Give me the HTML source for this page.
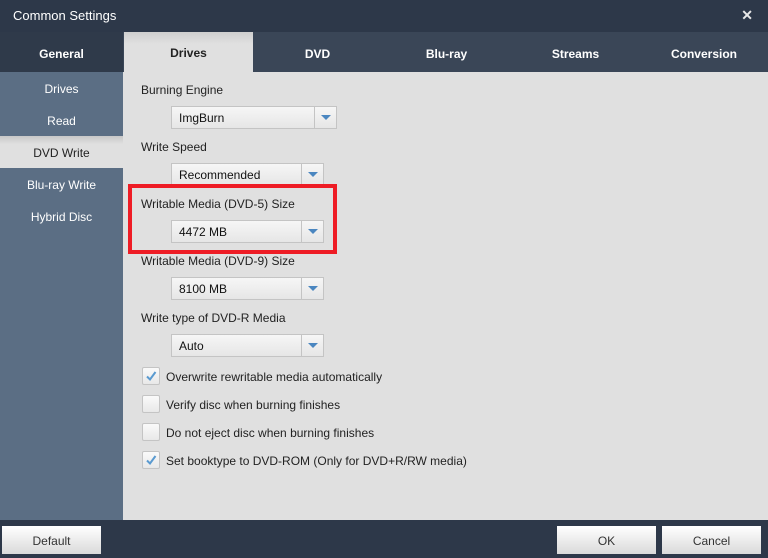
<!DOCTYPE html>
<html><head><style>
*{margin:0;padding:0;box-sizing:border-box}
body{width:768px;height:558px;overflow:hidden;font-family:"Liberation Sans",sans-serif;font-size:12px;background:#e0e0e0;position:relative}
.a{position:absolute}
.title{left:0;top:0;width:768px;height:32px;background:#2d3849;color:#fff;font-size:13px;line-height:32px;padding-left:13px}
.tabs{left:0;top:32px;width:768px;height:40px;background:#3a4657}
.tab{position:absolute;top:0;height:40px;line-height:44px;text-align:center;color:#fff;font-weight:bold;font-size:12px}
.tab.act{background:linear-gradient(#cfcfcf,#e0e0e0 12px);color:#222;line-height:42px}
.side{left:0;top:72px;width:123px;height:448px;background:#5b6e84}
.si{position:absolute;left:0;width:123px;height:32px;line-height:34px;text-align:center;color:#fff;font-size:12px}
.si.act{background:linear-gradient(#c8c8c8,#e0e0e0 8px);color:#222}
.lbl{position:absolute;left:141px;color:#222;font-size:12px}
.dd{position:absolute;left:171px;height:23px;border:1px solid #c4c4c4;background:linear-gradient(#f6f6f6,#e6e6e6);color:#111;font-size:12px;line-height:23px;padding-left:7px}
.dd .ar{position:absolute;right:0;top:0;width:22px;height:21px;border-left:1px solid #c4c4c4}
.dd .ar:after{content:"";position:absolute;left:6px;top:8px;border-left:5px solid transparent;border-right:5px solid transparent;border-top:5px solid #4a86c0}
.cb{position:absolute;left:142px;width:18px;height:18px;border:1px solid #c4c4c4;background:linear-gradient(#fafafa,#e8e8e8);border-radius:2px}
.ct{position:absolute;left:166px;color:#222;font-size:12px}
.bot{left:0;top:520px;width:768px;height:38px;background:#2d3849}
.btn{position:absolute;top:526px;height:28px;background:linear-gradient(#fff,#dadada);color:#333;text-align:center;line-height:30px;font-size:12px}
</style></head><body>
<div class="a title">Common Settings</div>
<div class="a" style="right:15px;top:7px;color:#e8e8e8;font-weight:bold;font-size:14px">✕</div>
<div class="a tabs">
<div class="tab" style="left:0;width:123px;background:#2f3a4a">General</div>
<div class="tab act" style="left:124px;width:129px">Drives</div>
<div class="tab" style="left:253px;width:129px">DVD</div>
<div class="tab" style="left:382px;width:129px">Blu-ray</div>
<div class="tab" style="left:511px;width:129px">Streams</div>
<div class="tab" style="left:640px;width:128px">Conversion</div>
</div>
<div class="a side">
<div class="si" style="top:0">Drives</div>
<div class="si" style="top:32px">Read</div>
<div class="si act" style="top:64px">DVD Write</div>
<div class="si" style="top:96px">Blu-ray Write</div>
<div class="si" style="top:128px">Hybrid Disc</div>
</div>
<div class="lbl" style="top:83px">Burning Engine</div>
<div class="dd" style="top:106px;width:166px">ImgBurn<div class="ar"></div></div>
<div class="lbl" style="top:140px">Write Speed</div>
<div class="dd" style="top:163px;width:153px">Recommended<div class="ar"></div></div>
<div class="a" style="left:128px;top:184px;width:209px;height:70px;border:4px solid #ee1c25"></div>
<div class="lbl" style="top:197px">Writable Media (DVD-5) Size</div>
<div class="dd" style="top:220px;width:153px">4472 MB<div class="ar"></div></div>
<div class="lbl" style="top:254px">Writable Media (DVD-9) Size</div>
<div class="dd" style="top:277px;width:153px">8100 MB<div class="ar"></div></div>
<div class="lbl" style="top:311px">Write type of DVD-R Media</div>
<div class="dd" style="top:334px;width:153px">Auto<div class="ar"></div></div>
<div class="cb" style="top:367px"><svg width="16" height="16" style="position:absolute;left:0;top:0"><path d="M4 8.5 L7 11.5 L12.5 4" stroke="#5a9ad0" stroke-width="2" fill="none"/></svg></div>
<div class="ct" style="top:370px">Overwrite rewritable media automatically</div>
<div class="cb" style="top:395px"></div>
<div class="ct" style="top:398px">Verify disc when burning finishes</div>
<div class="cb" style="top:423px"></div>
<div class="ct" style="top:426px">Do not eject disc when burning finishes</div>
<div class="cb" style="top:451px"><svg width="16" height="16" style="position:absolute;left:0;top:0"><path d="M4 8.5 L7 11.5 L12.5 4" stroke="#5a9ad0" stroke-width="2" fill="none"/></svg></div>
<div class="ct" style="top:454px">Set booktype to DVD-ROM (Only for DVD+R/RW media)</div>
<div class="a bot"></div>
<div class="btn" style="left:2px;width:99px">Default</div>
<div class="btn" style="left:557px;width:99px">OK</div>
<div class="btn" style="left:662px;width:99px">Cancel</div>
</body></html>
